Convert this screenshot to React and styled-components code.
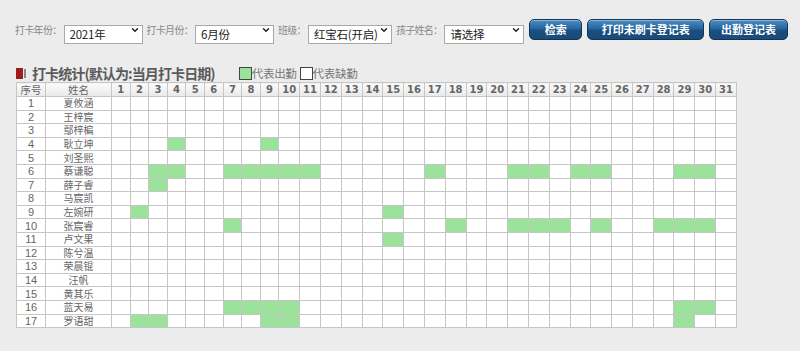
import React from 'react'
import styled, { createGlobalStyle } from 'styled-components'
import { ChevronDown } from 'lucide-react'

const GlobalStyle = createGlobalStyle`
    html, body {
        margin: 0;
        padding: 0;
        background: #ececec;
    }
    body {
        font-family: "Noto Sans CJK SC", "Noto Sans", sans-serif;
    }
`

const Page = styled.div`
    padding: 19px 12px 0 15px;
    width: 800px;
    box-sizing: border-box;
`

const Toolbar = styled.div`
    display: flex;
    align-items: center;
    height: 21px;
`

const Field = styled.div`
    display: flex;
    align-items: center;
    gap: 2px;
    margin-right: 4px;
`

const Label = styled.span`
    font-size: 10px;
    color: #888;
    white-space: nowrap;
    letter-spacing: -0.7px;
`

const SelectWrap = styled.div`
    position: relative;
    width: ${p => p.$w}px;
    height: 19px;
`

const Select = styled.select`
    appearance: none;
    width: 100%;
    height: 19px;
    box-sizing: border-box;
    border: 1px solid #a9a9a9;
    background: #fff;
    color: #222;
    font-family: "Noto Sans CJK SC", sans-serif;
    font-size: 11.5px;
    letter-spacing: -0.2px;
    line-height: 17px;
    padding: 0 12px 0 5px;
    border-radius: 0;
    outline: none;
`

const Arrow = styled(ChevronDown)`
    position: absolute;
    right: 3px;
    top: 5px;
    pointer-events: none;
    color: #222;
`

const Button = styled.button`
    width: ${p => p.$w}px;
    height: 21px;
    margin-left: ${p => p.$ml || 5}px;
    border: 1px solid #0f3558;
    border-radius: 5px;
    background: linear-gradient(#4d8dc2 0%, #2566a0 45%, #1a4f80 55%, #1a4a78 100%);
    box-shadow: inset 0 1px 0 rgba(255, 255, 255, 0.35);
    color: #fff;
    font-family: "Noto Sans CJK SC", sans-serif;
    font-size: 11px;
    font-weight: bold;
    padding: 0;
    line-height: 19px;
    cursor: pointer;
`

const TitleRow = styled.div`
    display: flex;
    align-items: center;
    margin-top: 24px;
    height: 18px;
    padding-left: 1px;
`

const Marker = styled.span`
    width: 7px;
    height: 11px;
    background: #a01c1c;
    margin-right: 1px;
`

const MarkerBar = styled.span`
    width: 2px;
    height: 9px;
    background: #888;
    margin-right: 6px;
`

const Title = styled.h3`
    margin: 0;
    font-size: 14px;
    font-weight: bold;
    color: #5a5a5a;
    letter-spacing: -0.9px;
    margin-right: 24px;
    white-space: nowrap;
`

const LegendBox = styled.span`
    width: 11px;
    height: 11px;
    border: 1px solid #444;
    background: ${p => (p.$on ? '#9be39b' : '#fff')};
`

const LegendText = styled.span`
    font-size: 11.5px;
    color: #777;
    margin-right: ${p => p.$mr || 0}px;
    letter-spacing: -0.3px;
    white-space: nowrap;
`

const Table = styled.table`
    border-collapse: collapse;
    table-layout: fixed;
    width: 721px;
    background: #fff;
    margin-left: 1px;
`

const Th = styled.th`
    height: 13px;
    padding: 0;
    border: 1px solid #c6c6c6;
    background: linear-gradient(#fbfbfb, #e9e9e9);
    color: #666;
    font-family: ${p => (p.$num ? '"DejaVu Sans", sans-serif' : '"Noto Sans CJK SC", sans-serif')};
    font-size: ${p => (p.$num ? 10 : 10.5)}px;
    font-weight: ${p => (p.$num ? 'bold' : 'normal')};
    line-height: 13px;
    text-align: center;
`

const Td = styled.td`
    height: 12.6px;
    padding: 0;
    border: 1px solid #c6c6c6;
    background: ${p => (p.$on ? '#9be39b' : '#fff')};
    color: #666;
    font-family: ${p => (p.$name ? '"Noto Sans CJK SC", sans-serif' : '"Liberation Sans", sans-serif')};
    font-size: ${p => (p.$name ? 10 : 11)}px;
    line-height: 12px;
    text-align: center;
    white-space: nowrap;
    overflow: hidden;
`

const students = [
    ['夏攸涵', []],
    ['王梓宸', []],
    ['鄢梓楄', []],
    ['耿立坤', [4, 9]],
    ['刘圣熙', []],
    ['蔡谦聪', [3, 4, 7, 8, 9, 10, 11, 17, 21, 22, 24, 25, 29, 30]],
    ['薛子睿', [3]],
    ['马宸凯', []],
    ['左婉研', [2, 15]],
    ['张宸睿', [7, 18, 21, 22, 23, 25, 28, 29, 30]],
    ['卢文果', [15]],
    ['陈兮温', []],
    ['荣晨锟', []],
    ['汪帆', []],
    ['黄其乐', []],
    ['蓝天易', [7, 8, 9, 10, 29, 30]],
    ['罗语甜', [2, 3, 9, 10, 29]],
]

const days = Array.from({ length: 31 }, (_, i) => i + 1)

function Dropdown({ width, value }) {
    return (
        <SelectWrap $w={width}>
            <Select defaultValue={value}>
                <option value={value}>{value}</option>
            </Select>
            <Arrow size={10} strokeWidth={3.5} />
        </SelectWrap>
    )
}

export default function App() {
    return (
        <Page>
            <GlobalStyle />
            <Toolbar>
                <Field>
                    <Label>打卡年份：</Label>
                    <Dropdown width={79} value="2021年" />
                </Field>
                <Field>
                    <Label>打卡月份：</Label>
                    <Dropdown width={79} value="6月份" />
                </Field>
                <Field>
                    <Label>班级：</Label>
                    <Dropdown width={84} value="红宝石(开启)" />
                </Field>
                <Field>
                    <Label>孩子姓名：</Label>
                    <Dropdown width={80} value="请选择" />
                </Field>
                <Button $w={53} $ml={1}>检索</Button>
                <Button $w={117}>打印未刷卡登记表</Button>
                <Button $w={79}>出勤登记表</Button>
            </Toolbar>

            <TitleRow>
                <Marker />
                <MarkerBar />
                <Title>打卡统计(默认为:当月打卡日期)</Title>
                <LegendBox $on />
                <LegendText $mr={3}>代表出勤</LegendText>
                <LegendBox />
                <LegendText>代表缺勤</LegendText>
            </TitleRow>

            <Table>
                <colgroup>
                    <col style={{ width: 29 }} />
                    <col style={{ width: 66 }} />
                    {days.map(d => (
                        <col key={d} style={{ width: d < 10 ? 18.6 : 20.8 }} />
                    ))}
                </colgroup>
                <thead>
                    <tr>
                        <Th>序号</Th>
                        <Th>姓名</Th>
                        {days.map(d => (
                            <Th key={d} $num>
                                {d}
                            </Th>
                        ))}
                    </tr>
                </thead>
                <tbody>
                    {students.map(([name, on], i) => (
                        <tr key={name}>
                            <Td>{i + 1}</Td>
                            <Td $name>{name}</Td>
                            {days.map(d => (
                                <Td key={d} $on={on.includes(d)} />
                            ))}
                        </tr>
                    ))}
                </tbody>
            </Table>
        </Page>
    )
}
